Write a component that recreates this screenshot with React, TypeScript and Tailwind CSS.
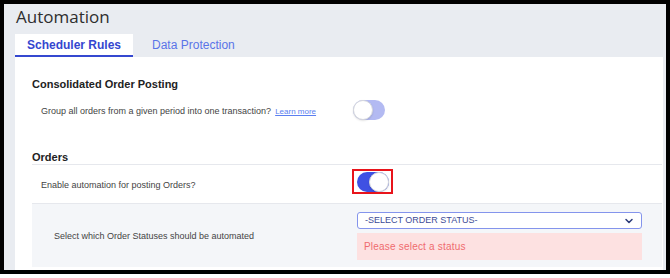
import React from 'react';
import { ChevronDown } from 'lucide-react';

const Toggle: React.FC<{ on: boolean }> = ({ on }) => (
  <div
    className={`relative w-[32px] h-[20px] rounded-full ${on ? 'bg-[#3f51e3]' : 'bg-[#b3baf2]'}`}
  >
    <div
      className={`absolute top-0 w-[20px] h-[20px] rounded-full bg-white border border-[#d6d8dd] shadow-[0_1px_2px_rgba(0,0,0,0.12)] ${on ? 'right-0' : 'left-0'}`}
    />
  </div>
);

const App: React.FC = () => {
  return (
    <div className="w-[670px] h-[278px] bg-white font-['Liberation_Sans',Arial,sans-serif]">
      <div className="w-[670px] h-[274px] border-[4px] border-black bg-[#e9ecf1] flex flex-col">
        {/* Header */}
        <div className="pl-[12px] pt-[3px] h-[30px]">
          <h1 className="text-[17px] leading-[20px] text-[#2e2e2e] font-['Open_Sans',sans-serif]">
            Automation
          </h1>
        </div>

        {/* Tabs */}
        <div className="flex pl-[11px] h-[23px] text-[12px] leading-[14px]">
          <div className="h-[23px] px-[12px] pt-[4px] bg-white border-b-2 border-[#3548d0] font-bold text-[#3446cf]">
            Scheduler Rules
          </div>
          <div className="h-[23px] pl-[19px] pt-[4px] text-[#5a74e8]">
            Data Protection
          </div>
        </div>

        {/* Content panel */}
        <div className="flex-1 ml-[11px] mr-[3px] bg-white pl-[17px] pr-[1px]">
          {/* Consolidated Order Posting */}
          <h2 className="mt-[21px] text-[11px] leading-[13px] font-bold text-[#222]">
            Consolidated Order Posting
          </h2>
          <div className="flex items-center mt-[9px] pl-[9px] h-[20px]">
            <div className="w-[312px] text-[9px] leading-[11px] text-[#444] pt-[2px]">
              Group all orders from a given period into one transaction?
              <span className="ml-[4px] text-[8px] text-[#5b7ff0] underline">Learn more</span>
            </div>
            <Toggle on={false} />
          </div>

          {/* Orders */}
          <h2 className="mt-[31px] text-[11px] leading-[13px] font-bold text-[#222] border-b border-[#e6e8ed]">
            Orders
          </h2>
          <div className="flex items-center h-[39px] pl-[9px] border-b border-[#e6e8ed]">
            <div className="w-[316px] text-[9px] leading-[11px] text-[#444] pt-[3px]">
              Enable automation for posting Orders?
            </div>
            <div className="relative -mt-[4px]">
              <Toggle on={true} />
              <div className="absolute -left-[5px] -top-[3px] w-[41px] h-[25px] border-2 border-[#e8141b]" />
            </div>
          </div>

          {/* Order statuses */}
          <div className="flex bg-[#f4f6f9] pl-[22px] pr-[20px] pt-[8px] pb-[7px]">
            <div className="w-[303px] pt-[19px] text-[9px] leading-[11px] text-[#444]">
              Select which Order Statuses should be automated
            </div>
            <div className="flex-1 flex flex-col gap-[4px]">
              <div className="h-[17px] bg-white border border-[#8494ec] rounded-[3px] flex items-center justify-between pl-[7px] pr-[6px]">
                <span className="text-[9px] leading-[11px] text-[#3d4b96]">-SELECT ORDER STATUS-</span>
                <ChevronDown size={12} strokeWidth={3} className="text-[#2b3a78]" />
              </div>
              <div className="h-[27px] bg-[#fde1e1] flex items-center pl-[7px]">
                <span className="text-[10px] leading-[12px] text-[#ef6b6e] tracking-[0.2px]">
                  Please select a status
                </span>
              </div>
            </div>
          </div>
        </div>
      </div>
    </div>
  );
};

export default App;
